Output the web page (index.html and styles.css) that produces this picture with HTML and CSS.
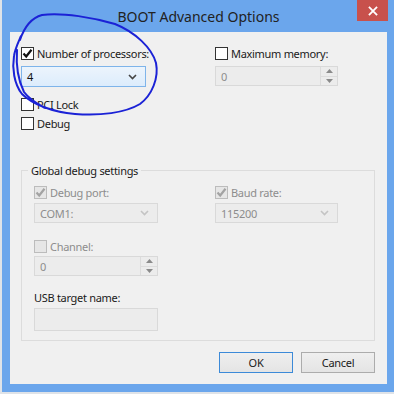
FILE: index.html
```html
<!DOCTYPE html>
<html>
<head>
<meta charset="utf-8">
<link rel="stylesheet" href="styles.css">
</head>
<body>
<div class="window">
  <div class="titlebar">
    <span class="title">BOOT Advanced Options</span>
    <div class="close"><svg width="11" height="11" viewBox="0 0 11 11"><path d="M1 1L10 10M10 1L1 10" stroke="#fff" stroke-width="2"/></svg></div>
  </div>
  <div class="client">
    <div class="top">
      <div class="col">
        <div class="cb"><span class="box"><svg class="tick" viewBox="0 0 13 13"><path d="M2.5 6.5L5.2 9.5L10.5 2.8" fill="none" stroke="#111" stroke-width="2.2"/></svg></span>Number of processors:</div>
        <div class="field select active w125"><span>4</span><svg class="chev" viewBox="0 0 9 6"><path d="M1 1L4.5 4.5L8 1" fill="none" stroke="#444" stroke-width="1.6"/></svg></div>
        <div class="cb pci"><span class="box"></span>PCI Lock</div>
        <div class="cb dbg"><span class="box"></span>Debug</div>
      </div>
      <div class="col">
        <div class="cb"><span class="box"></span>Maximum memory:</div>
        <div class="field spin disabled w123 memspin"><span>0</span><div class="spinbtns"><div class="sb"><svg viewBox="0 0 7 4"><path d="M0 4L3.5 0L7 4Z" fill="#8a8a8a"/></svg></div><div class="sb"><svg viewBox="0 0 7 4"><path d="M0 0L3.5 4L7 0Z" fill="#8a8a8a"/></svg></div></div></div>
      </div>
    </div>
    <div class="group">
      <span class="legend">Global debug settings</span>
      <div class="grow">
        <div class="gcol">
          <div class="cb off"><span class="box"><svg class="tick" viewBox="0 0 13 13"><path d="M2.5 6.5L5.2 9.5L10.5 2.8" fill="none" stroke="#a3a3a3" stroke-width="2.2"/></svg></span>Debug port:</div>
          <div class="field select disabled w124"><span>COM1:</span><svg class="chev" viewBox="0 0 9 6"><path d="M1 1L4.5 4.5L8 1" fill="none" stroke="#c4c4c4" stroke-width="1.6"/></svg></div>
        </div>
        <div class="gcol">
          <div class="cb off"><span class="box"><svg class="tick" viewBox="0 0 13 13"><path d="M2.5 6.5L5.2 9.5L10.5 2.8" fill="none" stroke="#a3a3a3" stroke-width="2.2"/></svg></span>Baud rate:</div>
          <div class="field select disabled w123"><span>115200</span><svg class="chev" viewBox="0 0 9 6"><path d="M1 1L4.5 4.5L8 1" fill="none" stroke="#c4c4c4" stroke-width="1.6"/></svg></div>
        </div>
      </div>
      <div class="cb off channel"><span class="box"></span>Channel:</div>
      <div class="field spin disabled w124 chspin"><span>0</span><div class="spinbtns"><div class="sb"><svg viewBox="0 0 7 4"><path d="M0 4L3.5 0L7 4Z" fill="#8a8a8a"/></svg></div><div class="sb"><svg viewBox="0 0 7 4"><path d="M0 0L3.5 4L7 0Z" fill="#8a8a8a"/></svg></div></div></div>
      <div class="usblabel">USB target name:</div>
      <div class="field text disabled w124"></div>
    </div>
    <div class="buttons">
      <div class="btn default">OK</div>
      <div class="btn">Cancel</div>
    </div>
  </div>
  <svg class="annot" width="394" height="394" viewBox="0 0 394 394"><path d="M20 40 C24 28 31 18 42 15 C62 12 95 18 115 24 C135 32 152 48 156 63 C159 78 152 95 140 104 C125 113 100 116 75 114 C52 112 32 104 22 94 C14 84 12 68 14 56 C15 49 18 43 21 36 M17 50 C16 64 18 80 24 92 C30 100 38 104 45 108" fill="none" stroke="#1b22d6" stroke-width="2" stroke-linecap="round"/></svg>
</div>
</body>
</html>
```
FILE: styles.css
```css
html, body {
  margin: 0;
  padding: 0;
}
body {
  width: 394px;
  height: 394px;
  overflow: hidden;
  background: #dfe3e8;
  font-family: "Noto Sans", "Open Sans", sans-serif;
  font-size: 11px;
  letter-spacing: -0.3px;
  color: #1a1a1a;
}
.window {
  position: relative;
  margin-left: 2px;
  width: 392px;
  height: 392px;
  background: #6ba6ec;
  box-sizing: border-box;
  padding: 0 7px 8px 8px;
  display: flex;
  flex-direction: column;
}
.titlebar {
  flex: none;
  height: 32px;
  display: flex;
  align-items: center;
  justify-content: center;
}
.title {
  font-size: 14px;
  letter-spacing: 0;
  color: #222;
}
.close {
  position: absolute;
  top: 0;
  right: 6px;
  width: 31px;
  height: 21px;
  background: #c8514c;
  display: flex;
  align-items: center;
  justify-content: center;
}
.close svg { width: 10px; height: 10px; }
.client {
  flex: none;
  height: 352px;
  box-sizing: border-box;
  background: #f0f0f0;
  padding: 15px 12px 11px 11px;
  display: flex;
  flex-direction: column;
}
.top {
  display: flex;
}
.col {
  flex: none;
  width: 194px;
  display: flex;
  flex-direction: column;
}
.cb {
  display: flex;
  align-items: center;
  gap: 3px;
  height: 13px;
  line-height: 13px;
  white-space: nowrap;
}
.box {
  width: 13px;
  height: 13px;
  box-sizing: border-box;
  border: 1px solid #333;
  background: #fff;
  flex: none;
  position: relative;
}
.tick {
  position: absolute;
  left: -1px;
  top: -1px;
  width: 13px;
  height: 13px;
}
.cb.off { color: #8d8d8d; }
.cb.off .box { border-color: #bcbcbc; background: #e6e6e6; }
.pci { margin-top: 11px; }
.dbg { margin-top: 6px; }
.field {
  box-sizing: border-box;
  border: 1px solid #d9d9d9;
  display: flex;
  align-items: center;
  padding-left: 5px;
  position: relative;
  flex: none;
}
.select { height: 20px; margin-top: 4px; justify-content: space-between; padding-right: 8px; }
.select.active {
  height: 21px;
  margin-top: 6px;
  border-color: #7eb4ea;
  background: linear-gradient(#ecf4fc, #dcecfc);
  color: #111;
}
.disabled { background: #ececec; color: #8d8d8d; }
.chev { width: 9px; height: 6px; }
.spin { height: 20px; padding-right: 0; justify-content: space-between; }
.memspin { margin-top: 6px; }
.spinbtns {
  width: 16px;
  height: 18px;
  display: flex;
  flex-direction: column;
  border-left: 1px solid #dcdcdc;
}
.sb {
  flex: 1;
  display: flex;
  align-items: center;
  justify-content: center;
  background: #ececec;
}
.sb + .sb { border-top: 1px solid #dcdcdc; }
.sb svg { width: 7px; height: 4px; }
.w125 { width: 125px; }
.w124 { width: 124px; }
.w123 { width: 123px; }
.group {
  flex: none;
  position: relative;
  margin-top: 40px;
  height: 171px;
  box-sizing: border-box;
  border: 1px solid #dcdcdc;
  padding: 15px 12px 9px 12px;
  display: flex;
  flex-direction: column;
}
.legend {
  position: absolute;
  top: -8px;
  left: 6px;
  padding: 0 3px;
  background: #f0f0f0;
  line-height: 15px;
}
.grow { display: flex; }
.gcol { flex: none; width: 181px; display: flex; flex-direction: column; }
.channel { margin-top: 17px; }
.chspin { margin-top: 3px; }
.usblabel { margin-top: 15px; line-height: 13px; }
.text { height: 23px; margin-top: 4px; background: #ececec; }
.buttons {
  display: flex;
  justify-content: flex-end;
  gap: 8px;
  margin-top: 11px;
}
.btn {
  width: 74px;
  height: 21px;
  box-sizing: border-box;
  border: 1px solid #acacac;
  background: linear-gradient(#efefef, #e4e4e4);
  display: flex;
  align-items: center;
  justify-content: center;
}
.btn.default { border-color: #3c8ad8; }
.annot {
  position: absolute;
  left: -2px;
  top: 0;
  pointer-events: none;
}
```
